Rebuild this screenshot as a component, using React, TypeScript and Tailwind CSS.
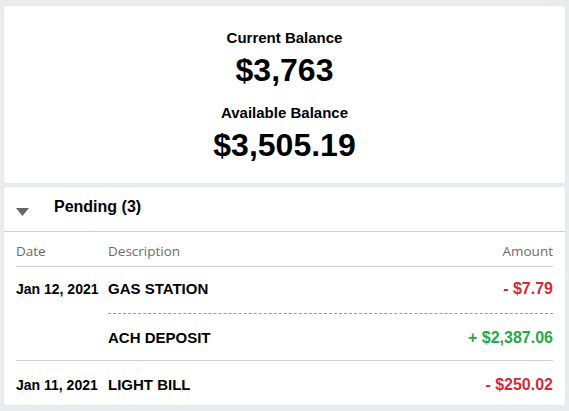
import React from 'react';

type Txn = { date?: string, description: string, amount: string, credit?: boolean, dashed?: boolean, rowClass: string, padClass: string };

const transactions: Txn[] = [
    { date: 'Jan 12, 2021', description: 'GAS STATION', amount: '- $7.79', rowClass: 'h-[46px]', padClass: 'pt-[12px]' },
    { description: 'ACH DEPOSIT', amount: '+ $2,387.06', credit: true, dashed: true, rowClass: 'h-[47px]', padClass: 'pt-[14px]' },
    { date: 'Jan 11, 2021', description: 'LIGHT BILL', amount: '- $250.02', rowClass: 'h-[45px] border-t border-[#cfcfcf]', padClass: 'pt-[14px]' },
];

function App() {
    return (
        <div className="min-h-[411px] bg-[#e9ecef] px-[4px] pt-[6px] pb-[6px] text-black" style={{ fontFamily: '"Liberation Sans", Arial, sans-serif' }}>
            <div className="bg-white rounded-[2px] shadow-[0_0_1px_rgba(0,0,0,0.15)] h-[177px] pt-[24px] flex flex-col items-center">
                <p className="text-[15px] leading-[16px] font-bold">Current Balance</p>
                <p className="text-[32px] leading-[32px] font-bold mt-[8px]">$3,763</p>
                <p className="text-[15px] leading-[16px] font-bold mt-[19px]">Available Balance</p>
                <p className="text-[32px] leading-[32px] font-bold mt-[8px]">$3,505.19</p>
            </div>

            <div className="bg-white rounded-[2px] shadow-[0_0_1px_rgba(0,0,0,0.15)] mt-[4px] h-[218px]">
                <div className="h-[45px] flex items-start border-b border-[#cfcfcf]">
                    <svg width="13" height="8" viewBox="0 0 13 8" className="ml-[12px] mt-[21px]">
                        <polygon points="0,0 13,0 6.5,8" fill="#666" />
                    </svg>
                    <span className="ml-[25px] mt-[10px] text-[16px] leading-[20px] font-bold">Pending (3)</span>
                </div>

                <div className="px-[12px]">
                    <div className="flex items-end h-[35px] pb-[5px] border-b border-[#cfcfcf] text-[13.5px] leading-[20px] text-[#6c6c6c]" style={{ fontFamily: '"Open Sans", sans-serif' }}>
                        <span className="w-[92px]">Date</span>
                        <span className="flex-1">Description</span>
                        <span>Amount</span>
                    </div>

                    {transactions.map((t, i) => (
                        <div key={i} className={`flex ${t.rowClass}`}>
                            <div className={`w-[92px] text-[14px] leading-[20px] font-bold whitespace-nowrap ${t.padClass}`}>{t.date}</div>
                            <div className={`flex-1 flex ${t.padClass} ${t.dashed ? 'border-t border-dashed border-[#999]' : ''}`}>
                                <span className="flex-1 text-[15px] leading-[20px] font-bold">{t.description}</span>
                                <span className={`text-[16px] leading-[20px] font-bold ${t.credit ? 'text-[#28a745]' : 'text-[#d42a35]'}`}>{t.amount}</span>
                            </div>
                        </div>
                    ))}
                </div>
            </div>
        </div>
    )
}

export default App
